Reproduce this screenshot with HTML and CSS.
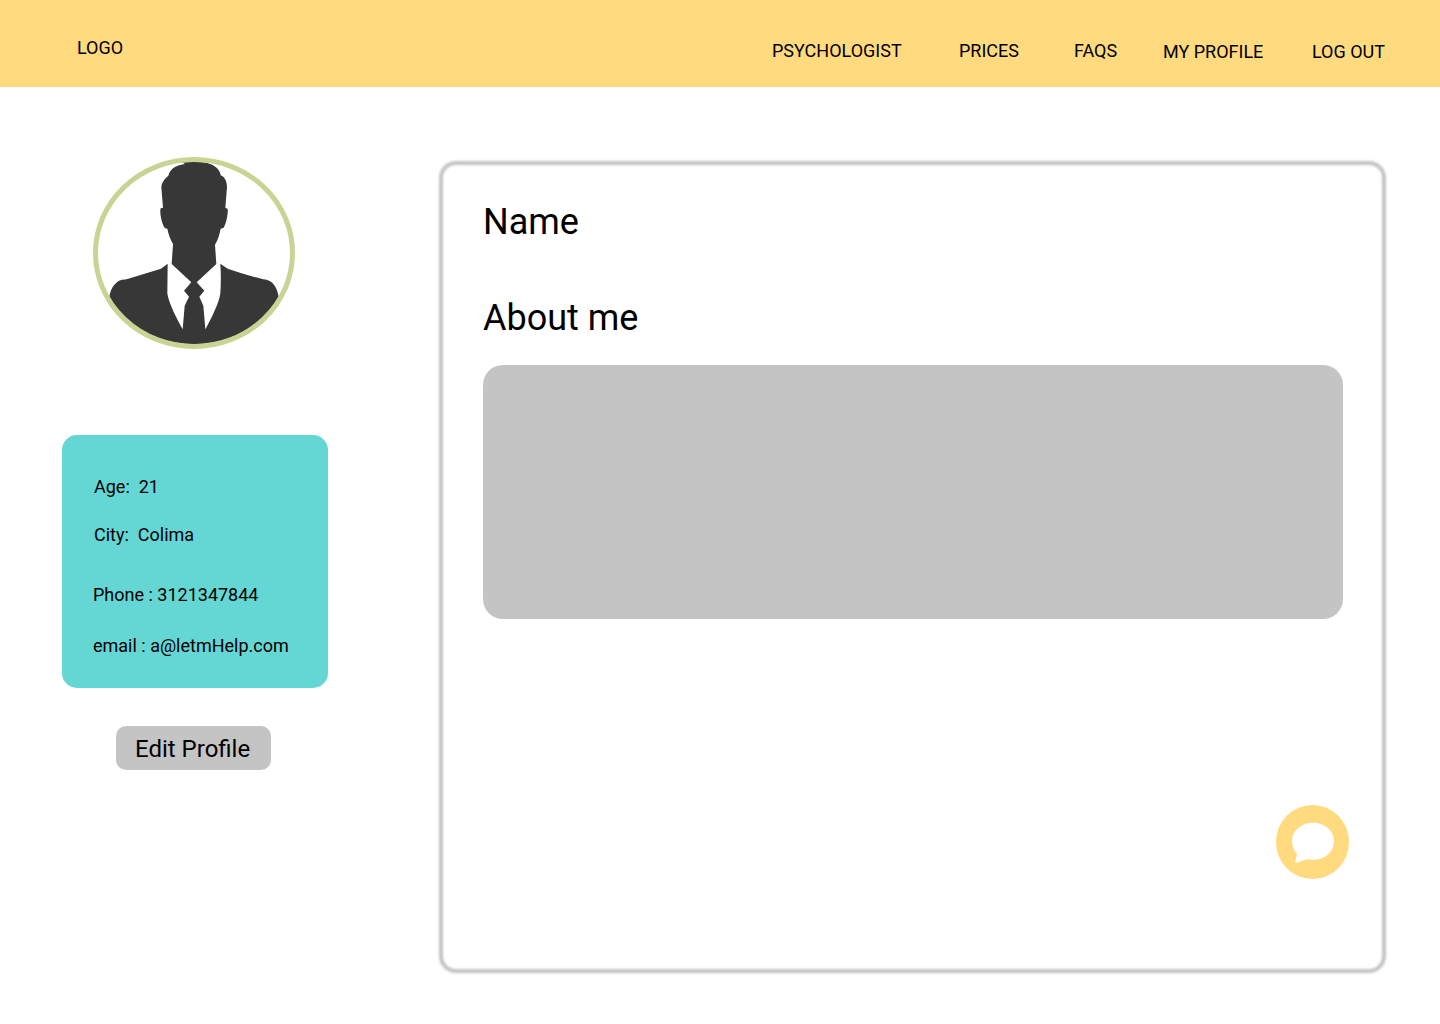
FILE: index.html
```html
<!DOCTYPE html>
<html lang="en">
<head>
<meta charset="utf-8">
<title>My Profile</title>
<link rel="stylesheet" href="styles.css">
</head>
<body>
<header class="topbar">
  <a class="logo">LOGO</a>
  <nav class="nav">
    <a class="nav-psychologist">PSYCHOLOGIST</a>
    <a class="nav-prices">PRICES</a>
    <a class="nav-faqs">FAQS</a>
    <a class="nav-profile">MY PROFILE</a>
    <a class="nav-logout">LOG OUT</a>
  </nav>
</header>
<main class="page">
  <aside class="sidebar">
    <svg class="avatar" viewBox="24 21 606 576" preserveAspectRatio="none" role="img" aria-label="Avatar">
      <defs><clipPath id="face"><ellipse cx="327" cy="309" rx="290" ry="274"/></clipPath></defs>
      <g clip-path="url(#face)" fill="#373737">
        <path d="M60 620 L73 440 C77 412 92 394 111 389 Q120 389 130 386 L228 356 L248 341 L247 430 C249 455 277 510 293 538 L299 467 L312 440 L297 422 L319 397 L260 342 L264 282 C256 268 250 252 247 236 L240 235 C230 222 223 185 227 175 L234 173 L229 112 C230 98 240 84 250 78 C253 62 266 46 300 42 L290 37 C320 31 355 33 378 43 C396 51 406 64 407 76 C420 80 426 96 426 112 L421 173 L428 177 C430 190 423 225 415 234 L407 236 C404 252 399 270 390 284 L394 342 L335 397 L358 422 L343 440 L355 467 L361 538 C378 508 404 455 406 430 C408 400 408 370 406 341 L428 356 Q480 374 535 388 C564 390 576 412 581 440 L600 620 Z"/>
      </g>
      <ellipse cx="327" cy="309" rx="295.5" ry="280.5" fill="none" stroke="#c9d394" stroke-width="15"/>
    </svg>
    <section class="details">
      <p class="age">Age:&nbsp; 21</p>
      <p class="city">City:&nbsp; Colima</p>
      <p class="phone">Phone : 3121347844</p>
      <p class="email">email : a@letmHelp.com</p>
    </section>
    <button class="edit" type="button">Edit Profile</button>
  </aside>
  <section class="panel">
    <h1 class="heading">Name</h1>
    <h2 class="heading about">About me</h2>
    <div class="bio"></div>
    <svg class="chat" viewBox="33 30 219 222" preserveAspectRatio="none" role="img" aria-label="Chat">
      <ellipse cx="142.500" cy="141" rx="109.500" ry="111" fill="#ffda7e"/>
      <path d="M144 83 C179 83 207 107 207 139 C207 171 179 195 144 195 Q135 195 127 192 L95 203 Q89 204 91 198 L96 177 Q81 160 81 139 C81 107 109 83 144 83 Z" fill="#fff"/>
    </svg>
  </section>
</main>
</body>
</html>
```
FILE: styles.css
```css
* {
  box-sizing: border-box;
}

body {
  margin: 0;
  background: #fff;
  color: #000;
  font: 18px/21px Roboto, sans-serif;
}

p, h1, h2 {
  margin: 0;
}

.topbar {
  display: flex;
  justify-content: space-between;
  height: 87px;
  padding: 37px 55px 0 77px;
  background: #ffda7e;
}

.nav {
  display: flex;
  padding-top: 3px;
  white-space: nowrap;
}

.nav-psychologist {
  width: 187px;
}

.nav-prices {
  width: 115px;
}

.nav-faqs {
  width: 89px;
}

.nav-profile {
  width: 149px;
  padding-top: 1px;
}

.nav-logout {
  width: 73px;
  padding-top: 1px;
}

.page {
  display: flex;
  align-items: flex-start;
  gap: 111px;
  padding: 70px 54px 51px 62px;
}

.sidebar {
  display: flex;
  flex-direction: column;
  width: 266px;
}

.avatar {
  display: block;
  width: 202px;
  height: 192px;
  margin-left: 31px;
}

.details {
  height: 253px;
  margin-top: 86px;
  padding: 41px 31px 0;
  border-radius: 15px;
  background: #64d7d4;
  white-space: nowrap;
}

.age,
.city {
  padding-left: 1px;
}

.city {
  margin-top: 27px;
}

.phone {
  margin-top: 39px;
}

.email {
  margin-top: 30px;
}

.edit {
  width: 155px;
  height: 44px;
  margin: 38px 0 0 54px;
  padding: 2px 0 0 19px;
  border: 0;
  border-radius: 10px;
  background: #c4c4c4;
  color: #000;
  font: 24px/28px Roboto, sans-serif;
  text-align: left;
}

.panel {
  position: relative;
  display: flex;
  flex-direction: column;
  flex: 1;
  height: 813px;
  margin-top: 3px;
  padding: 41px 37px 0 44px;
}

/* Softened outline behind the panel content */
.panel::before {
  content: "";
  position: absolute;
  inset: 1px 0 0;
  border: 4px solid #c4c4c4;
  border-radius: 17px;
  filter: blur(1px);
}

.heading {
  font-size: 36px;
  line-height: 42px;
  font-weight: 400;
}

.about {
  margin-top: 54px;
}

.bio {
  width: 860px;
  height: 254px;
  margin-top: 26px;
  border-radius: 20px;
  background: #c4c4c4;
}

.chat {
  display: block;
  width: 73px;
  height: 74px;
  margin: 186px 0 0 793px;
}
```
